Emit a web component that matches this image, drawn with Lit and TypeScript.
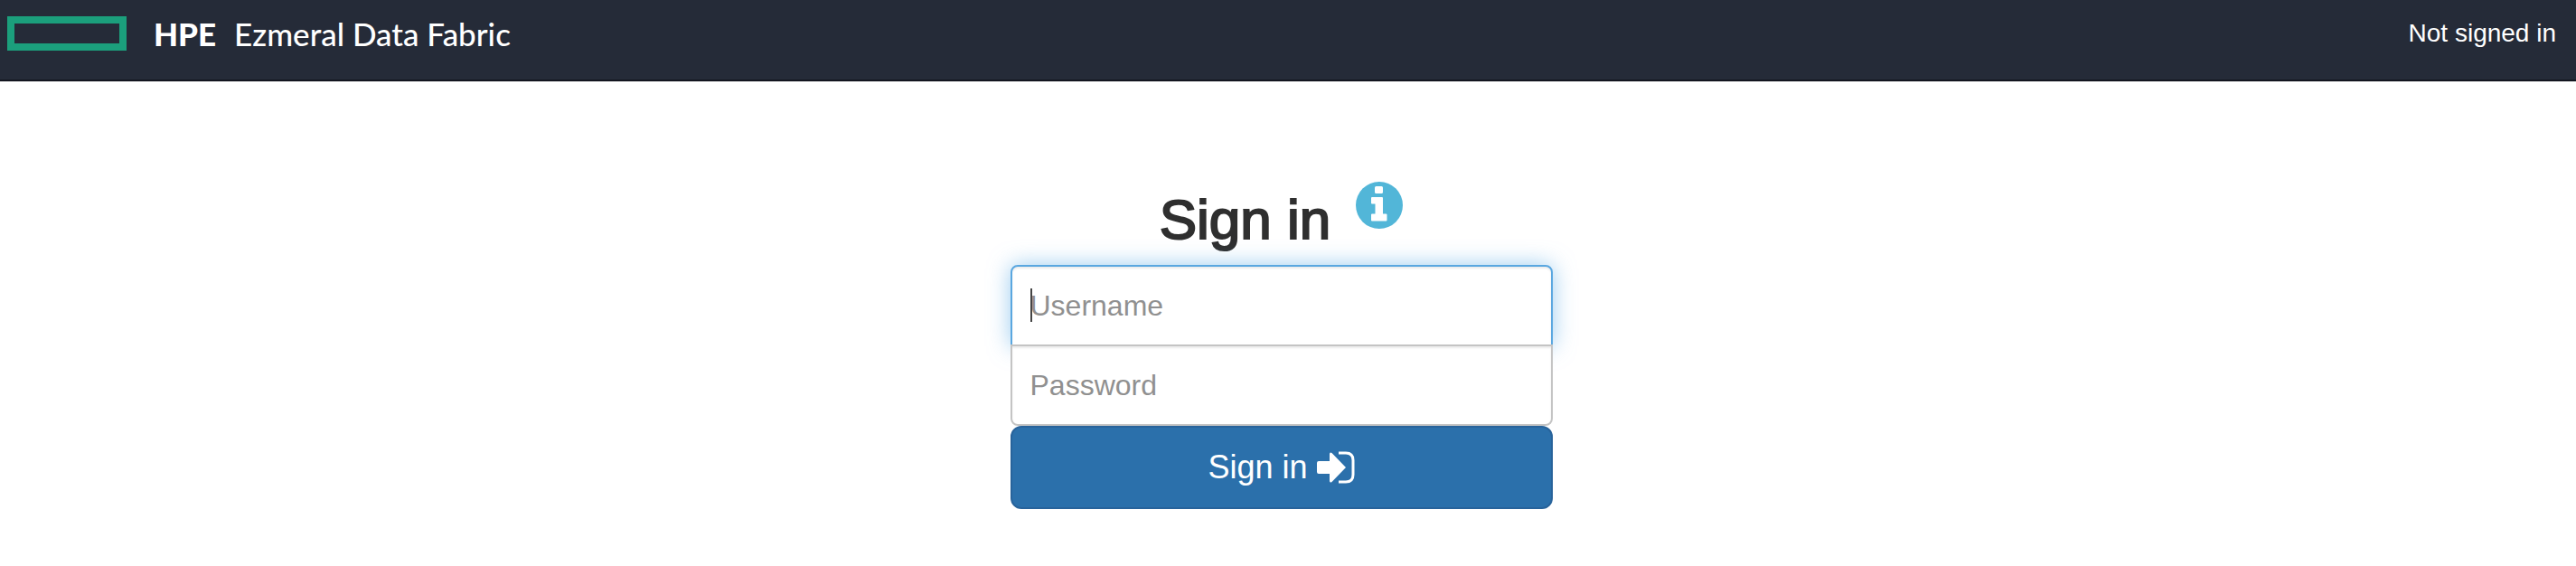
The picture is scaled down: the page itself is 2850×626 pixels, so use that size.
import { LitElement, html, css } from "lit";
import { customElement } from "lit/decorators.js";

@customElement("app-root")
export class AppRoot extends LitElement {
  static styles = css`
    :host {
      display: block;
      color: #333;
      font-family: "Liberation Sans", Arial, Helvetica, sans-serif;
      font-size: 28px;
      line-height: 38px;
    }
    .header {
      box-sizing: border-box;
      display: flex;
      justify-content: space-between;
      align-items: center;
      padding: 18px 22px 32px 8px;
      background: #252b38;
      border-bottom: 2px solid #13151f;
      color: #fff;
    }
    .brand {
      display: flex;
      align-items: center;
      gap: 30px;
      color: #fff;
      text-decoration: none;
      font-family: Lato, sans-serif;
      font-size: 35px;
      font-weight: 500;
    }
    .logo {
      display: block;
      width: 132px;
      height: 38px;
    }
    .product {
      display: flex;
      gap: 20px;
    }
    .product b {
      font-weight: 900;
    }
    .main {
      padding: 111px 15px 64px 0;
    }
    .form {
      width: 600px;
      max-width: 100%;
      margin: 0 auto;
    }
    .title {
      display: flex;
      justify-content: center;
      gap: 28px;
      margin: 0;
      padding-bottom: 8px;
      font-size: 62px;
      font-weight: 400;
      line-height: 84px;
      color: #2f2f2f;
      -webkit-text-stroke: 2px #2f2f2f;
    }
    .info {
      width: 52px;
      height: 52px;
      padding: 0;
      border: 0;
      background: none;
    }
    .info svg {
      display: block;
    }
    .field {
      display: block;
      box-sizing: border-box;
      width: 100%;
      height: 90px;
      margin: 0;
      padding: 20px;
      border: 2px solid #c4c4c4;
      background: #fff;
      box-shadow: inset 0 2px 2px rgba(0, 0, 0, 0.075);
      color: #555;
      font: inherit;
      font-size: 32px;
      outline: none;
    }
    .field::placeholder {
      color: #909090;
      opacity: 1;
    }
    .user {
      border-color: #5aa7e0;
      border-radius: 8px 8px 0 0;
      box-shadow: inset 0 2px 2px rgba(0, 0, 0, 0.075), 0 0 24px rgba(90, 170, 230, 0.6);
    }
    .pass {
      position: relative;
      margin-top: -2px;
      border-radius: 0 0 8px 8px;
    }
    .entry {
      position: relative;
    }
    .caret {
      position: absolute;
      left: 22px;
      top: 26px;
      width: 2px;
      height: 37px;
      background: #444;
    }
    .submit {
      display: flex;
      justify-content: center;
      align-items: center;
      gap: 10px;
      width: 100%;
      height: 92px;
      padding: 0;
      border: 2px solid #28639b;
      border-radius: 12px;
      background: #2b70ab;
      color: #fff;
      font: inherit;
      font-size: 36px;
    }
  `;

  render() {
    return html`
      <header class="header">
        <a class="brand" href="#">
          <svg class="logo" viewBox="0 0 132 38" aria-hidden="true">
            <rect x="4" y="4" width="124" height="30" fill="none" stroke="#1b9f7c" stroke-width="8" />
          </svg>
          <span class="product"><b>HPE</b><span>Ezmeral Data Fabric</span></span>
        </a>
        <span>Not signed in</span>
      </header>
      <main class="main">
        <form class="form" @submit=${(e: Event) => e.preventDefault()}>
          <h1 class="title">
            Sign in
            <button class="info" type="button" aria-label="Sign-in help">
              <svg width="52" height="52" viewBox="0 0 52 52">
                <circle cx="26" cy="26" r="26" fill="#52b6d8" />
                <path
                  fill="#fff"
                  d="M22.500 5h6q1.500 0 1.500 1.500v5q0 1.500-1.500 1.500h-6q-1.500 0-1.500-1.500v-5q0-1.500 1.500-1.500zM18 17h11q1 0 1 1v17.500h3.500q1 0 1 1v6q0 1-1 1H18q-1 0-1-1v-6q0-1 1-1h3.500v-11H18q-1 0-1-1V18q0-1 1-1z"
                />
              </svg>
            </button>
          </h1>
          <div class="entry">
            <input class="field user" type="text" placeholder="Username" aria-label="Username" />
            <span class="caret"></span>
          </div>
          <input class="field pass" type="password" placeholder="Password" aria-label="Password" />
          <button class="submit" type="submit">
            Sign in
            <svg width="42" height="36" viewBox="0 0 42 36" aria-hidden="true">
              <path fill="#fff" d="M2 11h12V3.500q0-3 2.500-1.500l15.500 16-15.500 16q-2.500 1.500-2.500-1.500v-7.500H2q-2 0-2-2V13q0-2 2-2z" />
              <path fill="none" stroke="#fff" stroke-width="3" d="M24 2h8q8 0 8 8v16q0 8-8 8h-8" />
            </svg>
          </button>
        </form>
      </main>
    `;
  }
}
